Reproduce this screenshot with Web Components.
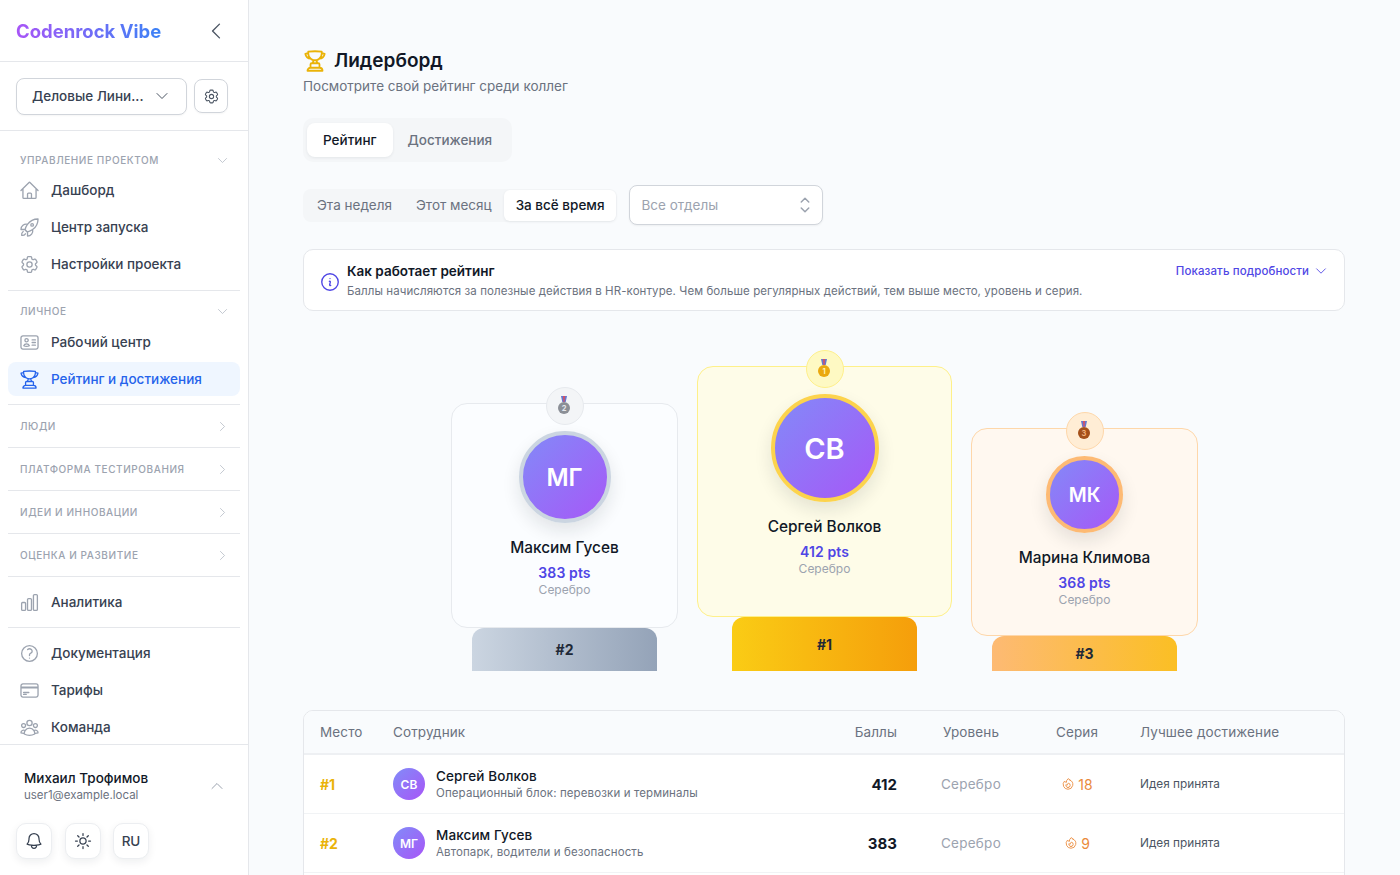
<!DOCTYPE html>
<html lang="ru">
<head>
<meta charset="utf-8">
<title>Лидерборд</title>
<style>
    html, body { margin: 0; height: 100%; overflow: hidden; }
    body { font-family: Inter, "Noto Sans", sans-serif; color: #111827; background: #f9fbfd; -webkit-font-smoothing: antialiased; }
</style>
</head>
<body>
<my-app></my-app>

<script>
const ICONS = {
    home: 'M2.25 12l8.954-8.955c.44-.439 1.152-.439 1.591 0L21.75 12M4.5 9.75v10.125c0 .621.504 1.125 1.125 1.125H9.75v-4.875c0-.621.504-1.125 1.125-1.125h2.25c.621 0 1.125.504 1.125 1.125V21h4.125c.621 0 1.125-.504 1.125-1.125V9.75M8.25 21h8.25',
    rocket: 'M15.59 14.37a6 6 0 01-5.84 7.38v-4.8m5.84-2.58a14.98 14.98 0 006.16-12.12A14.98 14.98 0 009.631 8.41m5.96 5.96a14.926 14.926 0 01-5.841 2.58m-.119-8.54a6 6 0 00-7.381 5.84h4.8m2.581-5.84a14.927 14.927 0 00-2.58 5.84m2.699 2.7c-.103.021-.207.041-.311.06a15.09 15.09 0 01-2.448-2.448 14.9 14.9 0 01.06-.312m-2.24 2.39a4.493 4.493 0 00-1.757 4.306 4.493 4.493 0 004.306-1.758M16.5 9a1.5 1.5 0 11-3 0 1.5 1.5 0 013 0z',
    cog: 'M9.594 3.94c.09-.542.56-.94 1.11-.94h2.593c.55 0 1.02.398 1.11.94l.213 1.281c.063.374.313.686.645.87.074.04.147.083.22.127.324.196.72.257 1.075.124l1.217-.456a1.125 1.125 0 011.37.49l1.296 2.247a1.125 1.125 0 01-.26 1.431l-1.003.827c-.293.24-.438.613-.431.992a6.759 6.759 0 010 .255c-.007.378.138.75.43.99l1.005.828c.424.35.534.954.26 1.43l-1.298 2.247a1.125 1.125 0 01-1.369.491l-1.217-.456c-.355-.133-.75-.072-1.076.124a6.57 6.57 0 01-.22.128c-.331.183-.581.495-.644.869l-.213 1.28c-.09.543-.56.941-1.11.941h-2.594c-.55 0-1.02-.398-1.11-.94l-.213-1.281c-.062-.374-.312-.686-.644-.87a6.52 6.52 0 01-.22-.127c-.325-.196-.72-.257-1.076-.124l-1.217.456a1.125 1.125 0 01-1.369-.49l-1.297-2.247a1.125 1.125 0 01.26-1.431l1.004-.827c.292-.24.437-.613.43-.992a6.932 6.932 0 010-.255c.007-.378-.138-.75-.43-.99l-1.004-.828a1.125 1.125 0 01-.26-1.43l1.297-2.247a1.125 1.125 0 011.37-.491l1.216.456c.356.133.751.072 1.076-.124.072-.044.146-.087.22-.128.332-.183.582-.495.644-.869l.214-1.281zM15 12a3 3 0 11-6 0 3 3 0 016 0z',
    idcard: 'M15 9h3.75M15 12h3.75M15 15h3.75M4.5 19.5h15a2.25 2.25 0 002.25-2.25V6.75A2.25 2.25 0 0019.5 4.5h-15a2.25 2.25 0 00-2.25 2.25v10.5A2.25 2.25 0 004.5 19.5zm6-10.125a1.875 1.875 0 11-3.75 0 1.875 1.875 0 013.75 0zm1.294 6.336a6.721 6.721 0 01-3.17.789 6.721 6.721 0 01-3.168-.789 3.376 3.376 0 016.338 0z',
    trophy: 'M16.5 18.75h-9m9 0a3 3 0 013 3h-15a3 3 0 013-3m9 0v-3.375c0-.621-.503-1.125-1.125-1.125h-.871M7.5 18.75v-3.375c0-.621.504-1.125 1.125-1.125h.872m5.007 0H9.497m5.007 0a7.454 7.454 0 01-.982-3.172M9.497 14.25a7.454 7.454 0 00.981-3.172M5.25 4.236c-.982.143-1.954.317-2.916.52A6.003 6.003 0 007.73 9.728M5.25 4.236V4.5c0 2.108.966 3.99 2.48 5.228M5.25 4.236V2.721C7.456 2.41 9.71 2.25 12 2.25c2.291 0 4.545.16 6.75.47v1.516M7.73 9.728a6.726 6.726 0 002.748 1.35m8.272-6.842V4.5c0 2.108-.966 3.99-2.48 5.228m2.48-5.492a46.32 46.32 0 012.916.52 6.003 6.003 0 01-5.395 4.972m0 0a6.726 6.726 0 01-2.749 1.35m0 0a6.772 6.772 0 01-3.044 0',
    chart: 'M3 13.125C3 12.504 3.504 12 4.125 12h2.25c.621 0 1.125.504 1.125 1.125v6.75C7.5 20.496 6.996 21 6.375 21h-2.25A1.125 1.125 0 013 19.875v-6.75zM9.75 8.625c0-.621.504-1.125 1.125-1.125h2.25c.621 0 1.125.504 1.125 1.125v11.25c0 .621-.504 1.125-1.125 1.125h-2.25a1.125 1.125 0 01-1.125-1.125V8.625zM16.5 4.125c0-.621.504-1.125 1.125-1.125h2.25C20.496 3 21 3.504 21 4.125v15.75c0 .621-.504 1.125-1.125 1.125h-2.25a1.125 1.125 0 01-1.125-1.125V4.125z',
    help: 'M9.879 7.519c1.171-1.025 3.071-1.025 4.242 0 1.172 1.025 1.172 2.687 0 3.712-.203.179-.43.326-.67.442-.745.361-1.45.999-1.45 1.827v.75M21 12a9 9 0 11-18 0 9 9 0 0118 0zm-9 5.25h.008v.008H12v-.008z',
    card: 'M2.25 8.25h19.5M2.25 9h19.5m-16.5 5.25h6m-6 2.25h3m-3.75 3h15a2.25 2.25 0 002.25-2.25V6.75A2.25 2.25 0 0019.5 4.5h-15a2.25 2.25 0 00-2.25 2.25v10.5A2.25 2.25 0 004.5 19.5z',
    users: 'M18 18.72a9.094 9.094 0 003.741-.479 3 3 0 00-4.682-2.72m.94 3.198l.001.031c0 .225-.012.447-.037.666A11.944 11.944 0 0112 21c-2.17 0-4.207-.576-5.963-1.584A6.062 6.062 0 016 18.719m12 0a5.971 5.971 0 00-.941-3.197m0 0A5.995 5.995 0 0012 12.75a5.995 5.995 0 00-5.058 2.772m0 0a3 3 0 00-4.681 2.72 8.986 8.986 0 003.74.477m.94-3.197a5.971 5.971 0 00-.94 3.197M15 6.75a3 3 0 11-6 0 3 3 0 016 0zm6 3a2.25 2.25 0 11-4.5 0 2.25 2.25 0 014.5 0zm-13.5 0a2.25 2.25 0 11-4.5 0 2.25 2.25 0 014.5 0z',
    bell: 'M14.857 17.082a23.848 23.848 0 005.454-1.31A8.967 8.967 0 0118 9.75v-.7V9A6 6 0 006 9v.75a8.967 8.967 0 01-2.312 6.022c1.733.64 3.56 1.085 5.455 1.31m5.714 0a24.255 24.255 0 01-5.714 0m5.714 0a3 3 0 11-5.714 0',
    sun: 'M12 3v2.25m6.364.386l-1.591 1.591M21 12h-2.25m-.386 6.364l-1.591-1.591M12 18.75V21m-4.773-4.227l-1.591 1.591M5.25 12H3m4.227-4.773L5.636 5.636M15.75 12a3.75 3.75 0 11-7.5 0 3.75 3.75 0 017.5 0z',
    info: 'M11.25 11.25l.041-.02a.75.75 0 011.063.852l-.708 2.836a.75.75 0 001.063.853l.041-.021M21 12a9 9 0 11-18 0 9 9 0 0118 0zm-9-3.75h.008v.008H12V8.25z',
    fire: 'M15.362 5.214A8.252 8.252 0 0112 21 8.25 8.25 0 016.038 7.048 8.287 8.287 0 009 9.6a8.983 8.983 0 013.361-6.867 8.21 8.21 0 003 2.48zM12 18a3.75 3.75 0 00.495-7.467 5.99 5.99 0 00-1.925 3.546 5.974 5.974 0 01-2.133-1A3.75 3.75 0 0012 18z',
    down: 'M19.5 8.25l-7.5 7.5-7.5-7.5',
    up: 'M4.5 15.75l7.5-7.5 7.5 7.5',
    left: 'M15.75 19.5L8.25 12l7.5-7.5',
    right: 'M8.25 4.5l7.5 7.5-7.5 7.5',
    updown: 'M8.25 15L12 18.75 15.75 15m-7.5-6L12 5.25 15.75 9'
};

class UiIcon extends HTMLElement {
    connectedCallback() {
        const size = this.getAttribute('size') || 20;
        const stroke = this.getAttribute('stroke') || 1.5;
        const root = this.shadowRoot || this.attachShadow({ mode: 'open' });
        root.innerHTML = `
            <style>
                :host { display: inline-flex; flex: none; }
                svg { display: block; }
            </style>
            <svg width="${size}" height="${size}" viewBox="0 0 24 24" fill="none" stroke="currentColor" stroke-width="${stroke}" stroke-linecap="round" stroke-linejoin="round">
                <path d="${ICONS[this.getAttribute('name')]}"/>
            </svg>`;
    }
}

class NavItem extends HTMLElement {
    connectedCallback() {
        const root = this.shadowRoot || this.attachShadow({ mode: 'open' });
        root.innerHTML = `
            <style>
                :host {
                    display: flex; align-items: center; gap: 11px;
                    height: 34px; padding: 0 12px 0 11px; box-sizing: border-box;
                    border-radius: 8px; font-size: 13.5px; font-weight: 500;
                    color: #374151;
                }
                :host([active]) { background: #eff6ff; color: #2563eb; }
                ui-icon { color: #9ca3af; }
                :host([active]) ui-icon { color: #2563eb; }
            </style>
            <ui-icon name="${this.getAttribute('icon')}" size="21"></ui-icon>
            <slot></slot>`;
    }
}

class NavGroup extends HTMLElement {
    connectedCallback() {
        const open = this.hasAttribute('open');
        const pad = this.getAttribute('pad') || (open ? '9px 0 8px' : '10px 0');
        const root = this.shadowRoot || this.attachShadow({ mode: 'open' });
        root.innerHTML = `
            <style>
                :host { display: block; border-bottom: 1px solid #e5e7eb; padding: ${pad}; }
                .title {
                    display: flex; align-items: center; justify-content: space-between;
                    height: 22px; padding: 0 11px 0 12px;
                    font-size: 10px; font-weight: 500; letter-spacing: .58px; color: #9ca3af;
                }
                ui-icon { color: #b6bcc6; }
                .items { display: flex; flex-direction: column; gap: 3px; margin-top: ${this.getAttribute('pad') ? 2 : 3}px; }
            </style>
            <div class="title">${this.getAttribute('title')}<ui-icon name="${open ? 'down' : 'right'}" size="13"></ui-icon></div>
            ${open ? '<div class="items"><slot></slot></div>' : ''}`;
    }
}

const sidebarTemplate = document.createElement('template');
sidebarTemplate.innerHTML = `
    <style>
        :host {
            display: flex; flex-direction: column; flex: none;
            width: 249px; height: 875px; box-sizing: border-box;
            background: #fff; border-right: 1px solid #e5e7eb;
        }
        .head {
            display: flex; align-items: center; justify-content: space-between;
            height: 62px; flex: none; box-sizing: border-box; padding: 0 21px 0 16px;
            border-bottom: 1px solid #e5e7eb;
        }
        .logo {
            font-size: 18.5px; font-weight: 700;
            background: linear-gradient(90deg, #a855f7, #3b82f6);
            -webkit-background-clip: text; background-clip: text; color: transparent;
        }
        .head ui-icon { color: #4b5563; }
        .workspace {
            display: flex; align-items: center; gap: 7px; flex: none;
            height: 69px; box-sizing: border-box; padding: 0 20px 0 16px;
            border-bottom: 1px solid #e5e7eb;
        }
        .select {
            display: flex; align-items: center; justify-content: space-between; flex: 1;
            height: 37px; box-sizing: border-box; padding: 0 16px 0 15px;
            border: 1px solid #d1d5db; border-radius: 8px; background: #fff;
            font-size: 13.5px; font-weight: 500; color: #374151;
            box-shadow: 0 1px 2px rgba(0,0,0,.04);
        }
        .select ui-icon { color: #4b5563; }
        .gear {
            display: flex; align-items: center; justify-content: center; flex: none;
            width: 34px; height: 34px; box-sizing: border-box;
            border: 1px solid #d1d5db; border-radius: 8px; color: #4b5563;
            box-shadow: 0 1px 2px rgba(0,0,0,.04);
        }
        nav { flex: 1; min-height: 0; overflow: hidden; padding: 8px 8px 0; }
        .plain { padding: 8px 0; border-bottom: 1px solid #e5e7eb; }
        .links { display: flex; flex-direction: column; gap: 3px; padding-top: 8px; }
        .foot { flex: none; height: 131px; box-sizing: border-box; border-top: 1px solid #e5e7eb; padding: 23px 16px 0; }
        .user { display: flex; align-items: center; justify-content: space-between; padding: 0 7px 0 8px; }
        .name { font-size: 13.5px; font-weight: 500; line-height: 20px; color: #111827; }
        .mail { font-size: 11.5px; line-height: 16px; color: #6b7280; margin-top: -1px; }
        .user ui-icon { color: #9ca3af; }
        .buttons { display: flex; gap: 12.5px; margin-top: 20px; }
        .btn {
            display: flex; align-items: center; justify-content: center;
            width: 36px; height: 36px; box-sizing: border-box; border: 1px solid #eceef1; border-radius: 10px;
            background: #fff; color: #374151; font-size: 13.5px; font-weight: 500;
            box-shadow: 0 3px 8px rgba(17,24,39,.07);
        }
    </style>
    <div class="head">
        <span class="logo">Codenrock Vibe</span>
        <ui-icon name="left" size="22"></ui-icon>
    </div>
    <div class="workspace">
        <div class="select">Деловые Лини...<ui-icon name="down" size="16"></ui-icon></div>
        <div class="gear"><ui-icon name="cog" size="17"></ui-icon></div>
    </div>
    <nav>
        <nav-group title="УПРАВЛЕНИЕ ПРОЕКТОМ" open pad="10px 0 9px">
            <nav-item icon="home">Дашборд</nav-item>
            <nav-item icon="rocket">Центр запуска</nav-item>
            <nav-item icon="cog">Настройки проекта</nav-item>
        </nav-group>
        <nav-group title="ЛИЧНОЕ" open>
            <nav-item icon="idcard">Рабочий центр</nav-item>
            <nav-item icon="trophy" active>Рейтинг и достижения</nav-item>
        </nav-group>
        <nav-group title="ЛЮДИ"></nav-group>
        <nav-group title="ПЛАТФОРМА ТЕСТИРОВАНИЯ"></nav-group>
        <nav-group title="ИДЕИ И ИННОВАЦИИ"></nav-group>
        <nav-group title="ОЦЕНКА И РАЗВИТИЕ"></nav-group>
        <div class="plain"><nav-item icon="chart">Аналитика</nav-item></div>
        <div class="links">
            <nav-item icon="help">Документация</nav-item>
            <nav-item icon="card">Тарифы</nav-item>
            <nav-item icon="users">Команда</nav-item>
        </div>
    </nav>
    <div class="foot">
        <div class="user">
            <div>
                <div class="name">Михаил Трофимов</div>
                <div class="mail">user1@example.local</div>
            </div>
            <ui-icon name="up" size="16"></ui-icon>
        </div>
        <div class="buttons">
            <div class="btn"><ui-icon name="bell" size="20"></ui-icon></div>
            <div class="btn"><ui-icon name="sun" size="20"></ui-icon></div>
            <div class="btn">RU</div>
        </div>
    </div>
`;

class AppSidebar extends HTMLElement {
    constructor() {
        super();
        this.attachShadow({ mode: 'open' }).appendChild(sidebarTemplate.content.cloneNode(true));
    }
}

// Two-level tab switch, `tabs` is a list separated with |
class SegmentedTabs extends HTMLElement {
    connectedCallback() {
        const active = this.getAttribute('active');
        const tabs = this.getAttribute('tabs').split('|').map(t =>
            `<span class="tab ${t === active ? 'on' : ''}">${t}</span>`).join('');
        const root = this.shadowRoot || this.attachShadow({ mode: 'open' });
        root.innerHTML = `
            <style>
                :host {
                    display: inline-flex; align-items: center; box-sizing: border-box;
                    background: #f4f6f8; border-radius: 10px;
                }
                :host([size="lg"]) { height: 44px; padding: 0 20px 0 4px; }
                :host([size="sm"]) { height: 33px; padding: 0 1px 0 2px; border-radius: 8px; }
                .tab { font-size: 13.5px; color: #6b7280; font-weight: 400; }
                :host([size="lg"]) .tab { padding: 0 16px; line-height: 34px; }
                :host([size="lg"]) .tab:not(.on) { padding: 0 0 0 15px; font-weight: 500; }
                :host([size="sm"]) .tab { padding: 0 12px; line-height: 31px; }
                .on {
                    background: #fff; color: #111827; font-weight: 500;
                    box-shadow: 0 1px 3px rgba(17,24,39,.07);
                }
                :host([size="lg"]) .on { border-radius: 8px; }
                :host([size="sm"]) .on { border-radius: 6px; }
            </style>
            ${tabs}`;
    }
}

class PodiumCard extends HTMLElement {
    connectedCallback() {
        const a = n => this.getAttribute(n);
        const place = a('place');
        const root = this.shadowRoot || this.attachShadow({ mode: 'open' });
        root.innerHTML = `
            <style>
                :host { display: flex; flex-direction: column; align-items: center; }
                .card {
                    position: relative; display: flex; flex-direction: column; align-items: center;
                    width: var(--w); height: var(--h); box-sizing: border-box; padding-top: 27px;
                    background: var(--bg); border: 1px solid var(--line); border-radius: 16px;
                }
                .medal {
                    position: absolute; top: -17px; left: 50%; margin-left: -19px;
                    width: 38px; height: 38px; box-sizing: border-box; border-radius: 50%;
                    display: flex; align-items: center; justify-content: center;
                    background: var(--medal-bg); border: 1px solid var(--line);
                }
                .medal svg { margin-right: 2px; }
                .avatar {
                    width: var(--av); height: var(--av); box-sizing: border-box; border-radius: 50%;
                    border: 4px solid var(--ring);
                    background: linear-gradient(135deg, #818cf8, #a855f7) border-box;
                    display: flex; align-items: center; justify-content: center;
                    color: #fff; font-size: var(--fs); font-weight: 600;
                    box-shadow: 0 8px 18px rgba(17,24,39,.11);
                }
                .name { margin-top: 13px; font-size: 15.4px; line-height: 24px; font-weight: 500; color: #111827; }
                .pts { margin-top: 3px; font-size: 14px; line-height: 20px; font-weight: 600; color: #4f46e5; letter-spacing: .1px; }
                .lvl { font-size: 12px; line-height: 16px; margin-top: -1px; color: #9ca3af; }
                .stand {
                    display: flex; align-items: center; justify-content: center;
                    width: 185px; height: var(--stand); border-radius: 12px 12px 0 0;
                    background: var(--stand-bg); font-size: 14px; font-weight: 700; color: #1f2937;
                }
            </style>
            <div class="card">
                <div class="medal">
                    <svg width="18" height="22" viewBox="0 0 18 22">
                        <path d="M6 1h6l-1.3 6H7.3z" fill="#6478cf"/>
                        <path d="M8 1h2L9.5 7h-1z" fill="#d9505f"/>
                        <circle cx="9" cy="13" r="6" fill="${a('metal')}"/>
                        <text x="9" y="15.6" text-anchor="middle" font-size="7.5" font-weight="700" font-family="Inter" fill="${a('digit')}">${place}</text>
                    </svg>
                </div>
                <div class="avatar">${a('initials')}</div>
                <div class="name">${a('name')}</div>
                <div class="pts">${a('pts')} pts</div>
                <div class="lvl">${a('level')}</div>
            </div>
            <div class="stand">#${place}</div>`;
    }
}

class LeaderRow extends HTMLElement {
    connectedCallback() {
        const a = n => this.getAttribute(n);
        const root = this.shadowRoot || this.attachShadow({ mode: 'open' });
        root.innerHTML = `
            <style>
                :host {
                    display: grid; grid-template-columns: 73px 444px 60px 148px 64px 1fr; align-items: center;
                    height: 59px; box-sizing: border-box; padding: 0 16px;
                    background: #fff; border-bottom: 1px solid #f1f3f5;
                }
                .rank { font-size: 14px; font-weight: 700; color: #eab308; }
                .who { display: flex; align-items: center; gap: 11px; }
                .av {
                    width: 32px; height: 32px; border-radius: 50%; flex: none;
                    background: linear-gradient(135deg, #818cf8, #a855f7);
                    display: flex; align-items: center; justify-content: center;
                    color: #fff; font-size: 12px; font-weight: 600;
                }
                .name { font-size: 13.5px; line-height: 18px; font-weight: 500; color: #111827; letter-spacing: .1px; }
                .sub { font-size: 11.5px; line-height: 16px; color: #6b7280; letter-spacing: .12px; }
                .score { text-align: right; font-size: 15px; font-weight: 700; color: #111827; }
                .lvl { text-align: center; font-size: 13.5px; color: #9ca3af; letter-spacing: .25px; }
                .streak { display: flex; align-items: center; justify-content: center; gap: 3px; font-size: 14px; color: #ea8a3c; }
                .best { padding-left: 31px; font-size: 11.8px; color: #4b5563; }
            </style>
            <div class="rank">#${a('place')}</div>
            <div class="who">
                <div class="av">${a('initials')}</div>
                <div><div class="name">${a('name')}</div><div class="sub">${a('sub')}</div></div>
            </div>
            <div class="score">${a('score')}</div>
            <div class="lvl">${a('level')}</div>
            <div class="streak"><ui-icon name="fire" size="14"></ui-icon>${a('streak')}</div>
            <div class="best">${a('best')}</div>`;
    }
}

const tableTemplate = document.createElement('template');
tableTemplate.innerHTML = `
    <style>
        :host {
            display: block; margin-top: 39px; padding-bottom: 40px;
            background: #fff; border: 1px solid #e5e7eb; border-radius: 10px; overflow: hidden;
        }
        .head {
            display: grid; grid-template-columns: 73px 444px 60px 148px 64px 1fr; align-items: center;
            height: 44px; box-sizing: border-box; padding: 0 16px;
            background: #f9fbfd; border-bottom: 2px solid #eef0f3;
            font-size: 13.5px; color: #6b7280; letter-spacing: .12px;
        }
        .r { text-align: right; }
        .c { text-align: center; }
        .l { padding-left: 31px; }
    </style>
    <div class="head">
        <div>Место</div><div>Сотрудник</div><div class="r">Баллы</div>
        <div class="c">Уровень</div><div class="c">Серия</div><div class="l">Лучшее достижение</div>
    </div>
    <slot></slot>
`;

class LeaderTable extends HTMLElement {
    constructor() {
        super();
        this.attachShadow({ mode: 'open' }).appendChild(tableTemplate.content.cloneNode(true));
    }
}

const infoTemplate = document.createElement('template');
infoTemplate.innerHTML = `
    <style>
        :host {
            display: flex; align-items: center; gap: 6px;
            height: 62px; box-sizing: border-box; margin-top: 24px; padding: 0 16px 0 15px;
            background: #fff; border: 1px solid #e5e7eb; border-radius: 10px;
        }
        .i { color: #4f46e5; margin-top: 3px; }
        .text { flex: 1; }
        .t { font-size: 13.5px; line-height: 18px; font-weight: 600; color: #111827; }
        .d { font-size: 11.5px; line-height: 16px; margin-top: 3px; color: #6b7280; letter-spacing: .08px; }
        .more { display: flex; align-items: center; gap: 5px; margin-top: -19px; font-size: 11.5px; font-weight: 500; color: #4f46e5; letter-spacing: .1px; }
    </style>
    <ui-icon class="i" name="info" size="22"></ui-icon>
    <div class="text">
        <div class="t">Как работает рейтинг</div>
        <div class="d">Баллы начисляются за полезные действия в HR-контуре. Чем больше регулярных действий, тем выше место, уровень и серия.</div>
    </div>
    <div class="more">Показать подробности<ui-icon name="down" size="14"></ui-icon></div>
`;

class InfoCard extends HTMLElement {
    constructor() {
        super();
        this.attachShadow({ mode: 'open' }).appendChild(infoTemplate.content.cloneNode(true));
    }
}

const appTemplate = document.createElement('template');
appTemplate.innerHTML = `
    <style>
        :host { display: flex; height: 875px; overflow: hidden; }
        main { flex: 1; min-width: 0; padding: 47px 55px 0 54px; }
        .title { display: flex; align-items: center; gap: 7px; font-size: 19px; line-height: 28px; font-weight: 600; color: #111827; }
        .title ui-icon { color: #eab308; }
        .sub { font-size: 13.5px; line-height: 20px; margin-top: 1px; color: #6b7280; }
        .tabs { margin-top: 22px; display: flex; }
        .filters { display: flex; align-items: center; gap: 12px; margin-top: 23px; }
        .dept {
            display: flex; align-items: center; justify-content: space-between;
            width: 194px; height: 40px; box-sizing: border-box; padding: 0 5px 0 11px;
            background: #fff; border: 1px solid #d1d5db; border-radius: 8px;
            font-size: 13.5px; color: #9ca3af;
            box-shadow: 0 1px 2px rgba(0,0,0,.05);
        }
        .dept ui-icon { color: #9ca3af; }
        .podium { display: flex; justify-content: center; align-items: flex-end; gap: 19px; height: 321px; margin-top: 39px; padding-left: 1px; }
        podium-card:nth-child(1) { --w: 227px; --h: 225px; --av: 92px; --fs: 24px; --stand: 43px; --bg: #fbfdff; --line: #e7eaee; --medal-bg: #f3f5f7; --ring: #cbd5e1; --stand-bg: linear-gradient(90deg, #cbd5e1, #94a3b8); }
        podium-card:nth-child(2) { --w: 255px; --h: 251px; --av: 108px; --fs: 29px; --stand: 54px; --bg: #fefce8; --line: #fef08a; --medal-bg: #fef9c3; --ring: #fcd34d; --stand-bg: linear-gradient(90deg, #facc15, #f59e0b); }
        podium-card:nth-child(3) { --w: 227px; --h: 208px; --av: 77px; --fs: 19.5px; --stand: 35px; --bg: #fff8f0; --line: #fed7aa; --medal-bg: #ffedd5; --ring: #fdba74; --stand-bg: linear-gradient(90deg, #fdba74, #fbbf24); }
    </style>
    <app-sidebar></app-sidebar>
    <main>
        <div class="title"><ui-icon name="trophy" size="24" stroke="1.8"></ui-icon>Лидерборд</div>
        <div class="sub">Посмотрите свой рейтинг среди коллег</div>
        <div class="tabs"><segmented-tabs size="lg" tabs="Рейтинг|Достижения" active="Рейтинг"></segmented-tabs></div>
        <div class="filters">
            <segmented-tabs size="sm" tabs="Эта неделя|Этот месяц|За всё время" active="За всё время"></segmented-tabs>
            <div class="dept">Все отделы<ui-icon name="updown" size="24"></ui-icon></div>
        </div>
        <info-card></info-card>
        <div class="podium">
            <podium-card place="2" initials="МГ" name="Максим Гусев" pts="383" level="Серебро" metal="#8b8f96" digit="#e5e7eb"></podium-card>
            <podium-card place="1" initials="СВ" name="Сергей Волков" pts="412" level="Серебро" metal="#eaa80f" digit="#fff3b0"></podium-card>
            <podium-card place="3" initials="МК" name="Марина Климова" pts="368" level="Серебро" metal="#a4501a" digit="#f3b27a"></podium-card>
        </div>
        <leader-table>
            <leader-row place="1" initials="СВ" name="Сергей Волков" sub="Операционный блок: перевозки и терминалы" score="412" level="Серебро" streak="18" best="Идея принята"></leader-row>
            <leader-row place="2" initials="МГ" name="Максим Гусев" sub="Автопарк, водители и безопасность" score="383" level="Серебро" streak="9" best="Идея принята"></leader-row>
        </leader-table>
    </main>
`;

class MyApp extends HTMLElement {
    constructor() {
        super();
        this.attachShadow({ mode: 'open' }).appendChild(appTemplate.content.cloneNode(true));
    }
}

customElements.define('ui-icon', UiIcon);
customElements.define('nav-item', NavItem);
customElements.define('nav-group', NavGroup);
customElements.define('app-sidebar', AppSidebar);
customElements.define('segmented-tabs', SegmentedTabs);
customElements.define('podium-card', PodiumCard);
customElements.define('leader-row', LeaderRow);
customElements.define('leader-table', LeaderTable);
customElements.define('info-card', InfoCard);
customElements.define('my-app', MyApp);
</script>
</body>
</html>
